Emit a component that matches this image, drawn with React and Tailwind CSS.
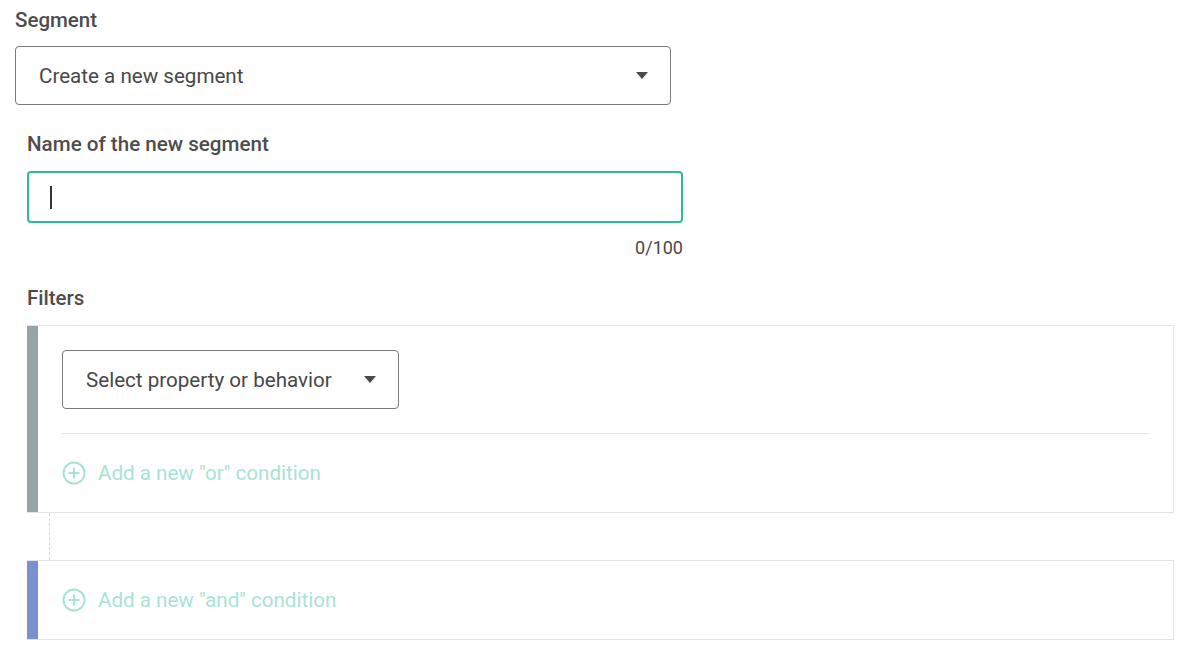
function Caret() {
  return (
    <svg width="12" height="8" viewBox="0 0 12 8" className="shrink-0">
      <path d="M0 0 L12 0 L6 7 Z" fill="#4a4a4a" />
    </svg>
  );
}

function PlusCircle() {
  return (
    <svg width="24" height="24" viewBox="0 0 24 24" fill="none" stroke="#a6e4d4" strokeWidth="2">
      <circle cx="12" cy="12" r="10.5" />
      <path d="M12 6.5v11M6.5 12h11" />
    </svg>
  );
}

function AddCondition({ label }) {
  return (
    <button className="flex items-center gap-3 text-[20.6px] leading-[24px] text-[#a6e4d4]">
      <PlusCircle />
      <span>{label}</span>
    </button>
  );
}

export default function App() {
  return (
    <div className="min-h-screen bg-white font-['Roboto',sans-serif] text-[#484848]">
      <div className="px-[15px] pt-[8px]">
        <div className="text-[20.5px] font-medium leading-[24px] text-[#4d4d4d]">Segment</div>
        <div className="mt-[14px] flex h-[59px] w-[656px] items-center justify-between rounded-[4px] border border-[#7a7a7a] pl-[23px] pr-[22px] text-[20.6px] leading-[24px]">
          <span>Create a new segment</span>
          <Caret />
        </div>
      </div>

      <div className="px-[27px]">
        <div className="mt-[27px] text-[20.6px] font-medium leading-[24px] text-[#4d4d4d]">Name of the new segment</div>
        <div className="mt-[15px] flex h-[52px] w-[656px] items-center rounded-[4px] border-2 border-[#2bbb9b] pl-[21px]">
          <div className="h-[23px] w-[1.5px] bg-[#333]" />
        </div>
        <div className="mt-[15px] w-[656px] text-right text-[18px] leading-[20px]">0/100</div>

        <div className="mt-[28px] text-[20.5px] font-medium leading-[24px] text-[#4d4d4d]">Filters</div>

        <div className="mt-[15px] flex w-[1147px] border border-l-0 border-[#e3e3e3]">
          <div className="w-[11px] shrink-0 bg-[#95a5a6]" />
          <div className="flex-1 px-[24px] pt-[24px] pb-[27px]">
            <div className="flex h-[59px] w-[337px] items-center justify-between rounded-[4px] border border-[#7a7a7a] pl-[23px] pr-[22px] text-[20.6px] leading-[24px]">
              <span>Select property or behavior</span>
              <Caret />
            </div>
            <div className="mt-[24px] h-px bg-[#e3e3e3]" />
            <div className="mt-[27px]">
              <AddCondition label={'Add a new "or" condition'} />
            </div>
          </div>
        </div>

        <div className="ml-[22px] h-[47px] border-l border-dashed border-[#d8d8d8]" />

        <div className="flex h-[80px] w-[1147px] border border-l-0 border-[#e3e3e3]">
          <div className="w-[11px] shrink-0 bg-[#7b90d0]" />
          <div className="flex flex-1 items-center pl-[24px]">
            <AddCondition label={'Add a new "and" condition'} />
          </div>
        </div>
      </div>
    </div>
  );
}
